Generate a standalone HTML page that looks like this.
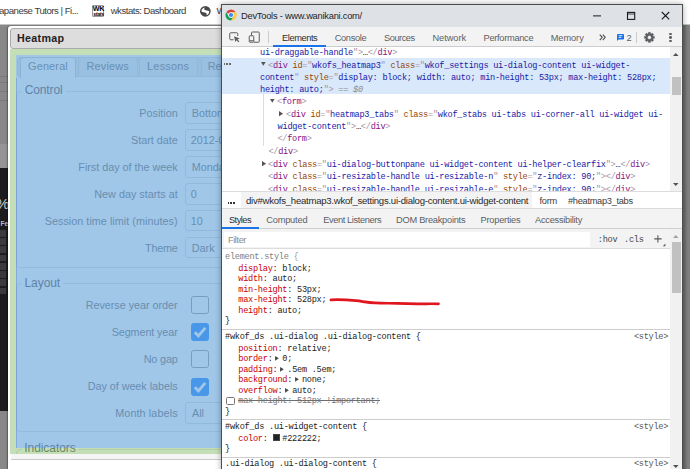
<!DOCTYPE html>
<html><head><meta charset="utf-8"><title>DevTools - www.wanikani.com/</title>
<style>
*{box-sizing:border-box;margin:0;padding:0}
html,body{width:690px;height:469px;overflow:hidden;background:#fff}
body{position:relative;font-family:"Liberation Sans",sans-serif;color:#222}
.a,.t,.m{position:absolute}
.t{line-height:20px;white-space:pre}
.m{line-height:20px;white-space:pre;font-family:"Liberation Mono",monospace;font-size:8.6px;letter-spacing:-0.264px;color:#222}
.tg{color:#881280}.br{color:#a894a6}.an{color:#994500}.av{color:#1a1aa6}.pr{color:#c80000}.gy{color:#808080}.gy2{color:#9a9a9a}.sk{color:#777}.m i{color:#8c8c8c}
svg{position:absolute;overflow:visible}
#bm{left:0;top:0;width:690px;height:25px;background:#fff;border-bottom:1px solid #c4c4c4}
#page{left:0;top:25px;width:690px;height:444px;background:#888888}
#dlg{left:7.6px;top:25.5px;width:400px;height:460px;background:#fff;border-radius:3px;box-shadow:-1px 0 1.5px rgba(0,0,0,.35)}
#ttl{left:10.3px;top:28px;width:400px;height:20.5px;background:#dddddd;border:1px solid #aaa;border-radius:3px}
.inp{position:absolute;left:185.2px;width:120px;height:21.6px;border:1px solid #d6d6d6;border-radius:3px;background:#fff}
.cb{position:absolute;left:191.3px;width:18px;height:18px;border:1px solid #858585;border-radius:2.5px;background:#fff}
.cb.on{background:#0075ff;border-color:#0075ff}
.fs{position:absolute;left:16.3px;width:400px;border:1px solid #dcdcdc;border-radius:4px}
.lg{background:#fff}
#dt{left:221px;top:4px;width:462.4px;height:480px;background:#fff;border:1px solid #4d4d4d;border-right-width:1.5px;box-shadow:0 0 6px 0 rgba(0,0,0,.33)}
.hl{position:absolute;height:1px;background:#cdcdcd}
</style></head><body>

<div id="bm" class="a"></div>
<span class="t" style="top:0.50px;font-size:9.6px;color:#3c3c3c;letter-spacing:-0.487px;left:-1.00px;">apanese Tutors | Fi...</span>
<span class="t" style="top:0.50px;font-size:9.6px;color:#3c3c3c;letter-spacing:-0.500px;left:110.70px;">wkstats: Dashboard</span>
<span class="t" style="top:0.50px;font-size:9.6px;color:#3c3c3c;left:216.50px;">W</span>
<div class="a" style="left:92.2px;top:4.9px;width:12.3px;height:12px;background:#fff;border:1px solid #9a9a9a;border-radius:1px"></div>
<span class="t" style="top:-1.20px;font-size:7.2px;color:#000;letter-spacing:-0.398px;left:92.80px;font-weight:bold;">WK</span>
<span class="t" style="top:3.80px;font-size:5.2px;color:#000;letter-spacing:-0.308px;left:93.20px;font-weight:bold;font-style:italic;">stats</span>
<svg style="left:199.6px;top:5.5px" width="10.7" height="10.7" viewBox="0 0 20 20"><circle cx="10" cy="10" r="10" fill="#484848"/><path d="M2.6 10 C2.6 6 5.5 3 9.4 2.7 C7.6 4.6 7.2 6.4 9.2 7.6 C11.6 9 14.4 8 17.3 9.6 C17.5 13.2 15.4 16.2 12 17.2 C13.2 15.2 12.6 13.6 10.6 12.8 C8 11.8 5 12.6 2.6 10Z" fill="#fff"/></svg>
<div id="page" class="a"></div><div class="a" style="left:680px;top:25px;width:10px;height:444px;background:linear-gradient(90deg,#6c6c6c 0 4.5px,#7e7e7e 7px,#828282)"></div>
<div class="a" style="left:0;top:76.1px;width:7.6px;height:1.2px;background:#7b7b7b"></div>
<div class="a" style="left:0;top:81.8px;width:7.6px;height:1.2px;background:#7b7b7b"></div>
<div class="a" style="left:0;top:90.9px;width:7.6px;height:1.2px;background:#7b7b7b"></div>
<div class="a" style="left:0;top:100.0px;width:7.6px;height:1.2px;background:#7b7b7b"></div>
<div class="a" style="left:0;top:144.3px;width:7.6px;height:24px;background:#959595"></div>
<div class="a" style="left:0;top:167.6px;width:7.6px;height:243px;background:#1c1c1e"></div>
<span class="t" style="top:193.50px;font-size:15px;color:#c9c9c9;left:-4.00px;">%</span>
<span class="t" style="top:214.00px;font-size:6.5px;color:#bdbdbd;left:0.50px;font-weight:bold;">Fe</span>
<div class="a" style="left:0;top:230.3px;width:6.4px;height:64.6px;background:repeating-linear-gradient(#3a3a3c 0 6.6px,#1c1c1e 6.6px 8.25px)"></div>
<div id="dlg" class="a"></div>
<div id="ttl" class="a"></div>
<span class="t" style="top:27.80px;font-size:10.7px;color:#222;letter-spacing:0.329px;left:17.00px;font-weight:bold;">Heatmap</span>
<div class="a" style="left:17px;top:56.5px;width:400px;height:20px;background:#e4e4e4;border:1px solid #d6d6d6;border-radius:3px"></div>
<div class="a" style="left:19.8px;top:57px;width:55.8px;height:20.5px;background:#fff;border:1px solid #c4c4c4;border-bottom:0;border-radius:3px 3px 0 0"></div>
<div class="a" style="left:77.6px;top:57px;width:60px;height:19px;background:#e9e9e9;border:1px solid #d4d4d4;border-bottom:0;border-radius:3px 3px 0 0"></div>
<div class="a" style="left:139.2px;top:57px;width:59px;height:19px;background:#e9e9e9;border:1px solid #d4d4d4;border-bottom:0;border-radius:3px 3px 0 0"></div>
<div class="a" style="left:200.6px;top:57px;width:70px;height:19px;background:#e9e9e9;border:1px solid #d4d4d4;border-bottom:0;border-radius:3px 3px 0 0"></div>
<span class="t" style="top:56.30px;font-size:10.9px;color:#606060;letter-spacing:0.174px;left:28.00px;">General</span>
<span class="t" style="top:56.30px;font-size:10.9px;color:#606060;letter-spacing:0.187px;left:86.50px;">Reviews</span>
<span class="t" style="top:56.30px;font-size:10.9px;color:#606060;letter-spacing:0.214px;left:147.10px;">Lessons</span>
<span class="t" style="top:56.30px;font-size:10.9px;color:#606060;left:207.70px;">Review Forecast</span>
<div class="fs" style="top:90.5px;height:177.5px"></div>
<div class="fs" style="top:283px;height:149px"></div>
<div class="fs" style="top:448.5px;height:60px"></div>
<div class="a lg" style="left:22px;top:84px;width:43.5px;height:12px"></div>
<div class="a lg" style="left:22px;top:277px;width:41px;height:12px"></div>
<div class="a lg" style="left:22px;top:442px;width:56px;height:12px"></div>
<span class="t" style="top:80.20px;font-size:12px;color:#3a3a3a;letter-spacing:-0.126px;left:24.70px;">Control</span>
<span class="t" style="top:272.70px;font-size:12px;color:#3a3a3a;letter-spacing:-0.072px;left:24.50px;">Layout</span>
<span class="t" style="top:438.30px;font-size:12px;color:#3a3a3a;letter-spacing:-0.073px;left:24.30px;">Indicators</span>
<div class="inp" style="top:102.3px"></div>
<span class="t" style="top:103.20px;font-size:10.8px;color:#585858;letter-spacing:-0.003px;left:139.30px;">Position</span>
<span class="t" style="top:103.20px;font-size:10.8px;color:#585858;left:191.80px;">Bottom</span>
<div class="inp" style="top:129.2px"></div>
<span class="t" style="top:130.10px;font-size:10.8px;color:#585858;letter-spacing:-0.013px;left:131.00px;">Start date</span>
<span class="t" style="top:130.10px;font-size:10.8px;color:#585858;left:190.80px;">2012-01-01</span>
<div class="inp" style="top:156.1px"></div>
<span class="t" style="top:157.00px;font-size:10.8px;color:#585858;letter-spacing:-0.012px;left:78.30px;">First day of the week</span>
<span class="t" style="top:157.00px;font-size:10.8px;color:#585858;left:191.80px;">Monday</span>
<div class="inp" style="top:183.0px"></div>
<span class="t" style="top:183.90px;font-size:10.8px;color:#585858;letter-spacing:-0.002px;left:94.30px;">New day starts at</span>
<span class="t" style="top:183.90px;font-size:10.8px;color:#585858;left:190.80px;">0</span>
<div class="inp" style="top:209.9px"></div>
<span class="t" style="top:210.80px;font-size:10.8px;color:#585858;letter-spacing:0.034px;left:44.70px;">Session time limit (minutes)</span>
<span class="t" style="top:210.80px;font-size:10.8px;color:#585858;left:190.80px;">10</span>
<div class="inp" style="top:236.8px"></div>
<span class="t" style="top:237.70px;font-size:10.8px;color:#585858;letter-spacing:-0.183px;left:145.00px;">Theme</span>
<span class="t" style="top:237.70px;font-size:10.8px;color:#585858;left:191.80px;">Dark</span>
<div class="cb" style="top:296.3px"></div>
<span class="t" style="top:295.20px;font-size:10.8px;color:#585858;letter-spacing:-0.025px;left:85.70px;">Reverse year order</span>
<div class="cb on" style="top:322.7px"></div>
<svg style="left:191.3px;top:322.7px" width="18" height="18" viewBox="0 0 18 18"><path d="M3.8 9.3 L7.4 12.9 L14.3 4.9" fill="none" stroke="#fff" stroke-width="2.9"/></svg>
<span class="t" style="top:321.60px;font-size:10.8px;color:#585858;letter-spacing:-0.103px;left:111.70px;">Segment year</span>
<div class="cb" style="top:350.1px"></div>
<span class="t" style="top:349.00px;font-size:10.8px;color:#585858;letter-spacing:-0.138px;left:143.70px;">No gap</span>
<div class="cb on" style="top:377.5px"></div>
<svg style="left:191.3px;top:377.5px" width="18" height="18" viewBox="0 0 18 18"><path d="M3.8 9.3 L7.4 12.9 L14.3 4.9" fill="none" stroke="#fff" stroke-width="2.9"/></svg>
<span class="t" style="top:376.40px;font-size:10.8px;color:#585858;letter-spacing:-0.036px;left:87.70px;">Day of week labels</span>
<div class="inp" style="top:402.4px"></div>
<span class="t" style="top:403.10px;font-size:10.8px;color:#585858;letter-spacing:0.105px;left:115.20px;">Month labels</span>
<span class="t" style="top:403.10px;font-size:10.8px;color:#585858;left:192.00px;">All</span>
<div class="a" style="left:8px;top:453.7px;width:400px;height:20px;background:#fff"></div>
<div class="a" style="left:10.5px;top:453.7px;width:400px;height:5.6px;background:#f5f5f5"></div>
<div class="a" style="left:10.5px;top:459.2px;width:400px;height:1px;background:#c9c9c9"></div>
<div class="a" style="left:10.3px;top:48.6px;width:400px;height:6.6px;background:rgba(147,196,125,.55)"></div>
<div class="a" style="left:10.3px;top:55.2px;width:5.7px;height:392.8px;background:rgba(147,196,125,.55)"></div>
<div class="a" style="left:10.3px;top:448px;width:400px;height:5.7px;background:rgba(147,196,125,.55)"></div>
<div class="a" style="left:16px;top:55.2px;width:400px;height:392.8px;background:rgba(111,168,220,.66)"></div>
<div class="a" style="left:15.8px;top:78px;width:0.9px;height:370px;background:rgba(80,120,200,.35)"></div>
<div id="dt" class="a"></div>
<div class="a" style="left:222px;top:5px;width:460px;height:21.7px;background:#dee1e6"></div>
<svg style="left:224.8px;top:9px" width="12" height="12" viewBox="0 0 48 48"><path d="M24 2 A22 22 0 0 1 43.05 13 L24 13 A11 11 0 0 0 14.47 18.5 L4.95 13 A22 22 0 0 1 24 2Z" fill="#db4437"/>
<path d="M43.05 13 A22 22 0 0 1 24 46 L33.53 29.5 A11 11 0 0 0 33.53 18.5 L33.53 13Z" fill="#ffcd40"/>
<path d="M24 13 L43.05 13 A22 22 0 0 1 24 46 L33.53 29.5 A11 11 0 0 0 24 13Z" fill="#ffcd40"/>
<path d="M24 46 A22 22 0 0 1 4.95 13 L14.47 29.5 A11 11 0 0 0 33.53 29.5 L24 46Z" fill="#0f9d58"/>
<circle cx="24" cy="24" r="10.5" fill="#fff"/><circle cx="24" cy="24" r="8.3" fill="#4285f4"/></svg>
<span class="t" style="top:6.00px;font-size:9.3px;color:#1f1f1f;letter-spacing:-0.238px;left:241.00px;">DevTools - www.wanikani.com/</span>
<svg style="left:590px;top:8px" width="84" height="16" viewBox="0 0 84 16"><g fill="none" stroke="#1a1a1a" stroke-width="1">
<path d="M3 7.9 H11"/><rect x="37.5" y="4.4" width="7.2" height="7" stroke-width="1.1"/><path d="M37.5 6H44.7" stroke-width="0.8"/><path d="M71.8 4 L79.2 11.3 M79.2 4 L71.8 11.3" stroke-width="1.1"/></g></svg>
<div class="a" style="left:222px;top:26.7px;width:460px;height:20.3px;background:#f3f3f3;border-bottom:1px solid #cbcdd1"></div>
<svg style="left:228.5px;top:32.3px" width="11.5" height="10.5" viewBox="0 0 23 21"><path d="M9 15.5 H3.5 A2 2 0 0 1 1.5 13.5 V3.5 A2 2 0 0 1 3.5 1.5 H15.5 A2 2 0 0 1 17.5 3.5 V8" fill="none" stroke="#5c5c5c" stroke-width="2"/><path d="M10 8.5 L21.5 13 L17 14.8 L20.8 19 L19 20.6 L15.3 16.3 L12.8 20 Z" fill="#5c5c5c"/></svg>
<svg style="left:248px;top:31px" width="12.5" height="12.5" viewBox="0 0 25 25"><g fill="none" stroke="#5c5c5c" stroke-width="2"><path d="M7 9 V3.5 A1.5 1.5 0 0 1 8.5 2 H21 A1.5 1.5 0 0 1 22.5 3.5 V21 A1.5 1.5 0 0 1 21 22.5 H12"/><rect x="2.5" y="9.5" width="9" height="13" rx="1.5"/></g><path d="M3 19.5H11" stroke="#5c5c5c" stroke-width="2"/></svg>
<div class="a" style="left:268px;top:31.3px;width:1px;height:11.5px;background:#cacaca"></div>
<span class="t" style="top:28.00px;font-size:9.25px;color:#2e2e2e;letter-spacing:-0.407px;left:282.00px;">Elements</span>
<span class="t" style="top:28.00px;font-size:9.25px;color:#5c6063;letter-spacing:-0.320px;left:334.70px;">Console</span>
<span class="t" style="top:28.00px;font-size:9.25px;color:#5c6063;letter-spacing:-0.462px;left:384.00px;">Sources</span>
<span class="t" style="top:28.00px;font-size:9.25px;color:#5c6063;letter-spacing:-0.061px;left:432.50px;">Network</span>
<span class="t" style="top:28.00px;font-size:9.25px;color:#5c6063;letter-spacing:-0.296px;left:483.60px;">Performance</span>
<span class="t" style="top:28.00px;font-size:9.25px;color:#5c6063;letter-spacing:-0.068px;left:550.70px;">Memory</span>
<div class="a" style="left:273px;top:45.4px;width:52.8px;height:1.8px;background:#1a73e8"></div>
<svg style="left:598.8px;top:33.8px" width="7" height="6.6" viewBox="0 0 14 13"><path d="M1.5 1 L6.5 6.5 L1.5 12 M7.5 1 L12.5 6.5 L7.5 12" fill="none" stroke="#4c4f52" stroke-width="2.2"/></svg>
<svg style="left:616.6px;top:33.5px" width="7" height="7" viewBox="0 0 14 14"><path d="M1.5 0 H12.5 A1.5 1.5 0 0 1 14 1.5 V9.5 A1.5 1.5 0 0 1 12.5 11 H3.2 L0 14 V1.5 A1.5 1.5 0 0 1 1.5 0Z" fill="#1a73e8"/><path d="M3.4 3.4H10.6M3.4 6.8H8.6" stroke="#fff" stroke-width="1.7"/></svg>
<span class="t" style="top:27.70px;font-size:9.25px;color:#5c6063;left:626.40px;">2</span>
<div class="a" style="left:635.8px;top:31.5px;width:1px;height:11.3px;background:#cacaca"></div>
<svg style="left:644.4px;top:32px" width="10.8" height="10.8" viewBox="0 0 20 20"><path d="M16.62 7.73 L19.37 7.90 L19.37 12.10 L16.62 12.27 L16.29 13.08 L18.11 15.14 L15.14 18.11 L13.08 16.29 L12.27 16.62 L12.10 19.37 L7.90 19.37 L7.73 16.62 L6.92 16.29 L4.86 18.11 L1.89 15.14 L3.71 13.08 L3.38 12.27 L0.63 12.10 L0.63 7.90 L3.38 7.73 L3.71 6.92 L1.89 4.86 L4.86 1.89 L6.92 3.71 L7.73 3.38 L7.90 0.63 L12.10 0.63 L12.27 3.38 L13.08 3.71 L15.14 1.89 L18.11 4.86 L16.29 6.92Z M13.50 10.00 A3.5 3.5 0 1 0 6.50 10.00 A3.5 3.5 0 1 0 13.50 10.00Z" fill="#5a5d61" fill-rule="evenodd" stroke="#5a5d61" stroke-width="0.5" stroke-linejoin="round"/></svg>
<div class="a" style="left:669.4px;top:32.550000000000004px;width:2.3px;height:2.3px;border-radius:50%;background:#5f6368"></div>
<div class="a" style="left:669.4px;top:36.25px;width:2.3px;height:2.3px;border-radius:50%;background:#5f6368"></div>
<div class="a" style="left:669.4px;top:39.95px;width:2.3px;height:2.3px;border-radius:50%;background:#5f6368"></div>
<div class="a" style="left:222px;top:58px;width:448.4px;height:36px;background:#d9e8fb"></div>
<div class="a" style="left:263px;top:94px;width:1px;height:52px;background:#d3ddf0"></div>
<div class="a" style="left:223.50px;top:63.3px;width:1.8px;height:1.8px;background:#6a6a6a"></div>
<div class="a" style="left:226.45px;top:63.3px;width:1.8px;height:1.8px;background:#6a6a6a"></div>
<div class="a" style="left:229.40px;top:63.3px;width:1.8px;height:1.8px;background:#6a6a6a"></div>
<div class="m" style="left:260.00px;top:42.70px;"><span class="av">ui-draggable-handle</span><span class="br">"</span><span class="br">&gt;</span>…<span class="br">&lt;/</span><span class="tg">div</span><span class="br">&gt;</span></div>
<svg style="left:260.8px;top:62.2px" width="4.6" height="3.8" viewBox="0 0 10 8"><path d="M0 0H10L5 8Z" fill="#555"/></svg>
<div class="m" style="left:268.00px;top:56.00px;"><span class="br">&lt;</span><span class="tg">div</span> <span class="an">id</span><span class="br">="</span><span class="av">wkofs_heatmap3</span><span class="br">"</span> <span class="an">class</span><span class="br">="</span><span class="av">wkof_settings ui-dialog-content ui-widget-</span></div>
<div class="m" style="left:260.00px;top:68.00px;"><span class="av">content</span><span class="br">"</span> <span class="an">style</span><span class="br">="</span><span class="av">display: block; width: auto; min-height: 53px; max-height: 528px;</span></div>
<div class="m" style="left:260.00px;top:80.00px;"><span class="av">height: auto;</span><span class="br">"</span><span class="br">&gt;</span> <i>== $0</i></div>
<svg style="left:270px;top:99.2px" width="4.6" height="3.8" viewBox="0 0 10 8"><path d="M0 0H10L5 8Z" fill="#555"/></svg>
<div class="m" style="left:277.00px;top:91.60px;"><span class="br">&lt;</span><span class="tg">form</span><span class="br">&gt;</span></div>
<svg style="left:279px;top:110.8px" width="4.1" height="5.3" viewBox="0 0 8 10"><path d="M0 0V10L8 5Z" fill="#555"/></svg>
<div class="m" style="left:286.00px;top:104.80px;"><span class="br">&lt;</span><span class="tg">div</span> <span class="an">id</span><span class="br">="</span><span class="av">heatmap3_tabs</span><span class="br">"</span> <span class="an">class</span><span class="br">="</span><span class="av">wkof_stabs ui-tabs ui-corner-all ui-widget ui-</span></div>
<div class="m" style="left:277.60px;top:116.80px;"><span class="av">widget-content</span><span class="br">"</span><span class="br">&gt;</span>…<span class="br">&lt;/</span><span class="tg">div</span><span class="br">&gt;</span></div>
<div class="m" style="left:277.40px;top:129.30px;"><span class="br">&lt;/</span><span class="tg">form</span><span class="br">&gt;</span></div>
<div class="m" style="left:268.40px;top:142.30px;"><span class="br">&lt;/</span><span class="tg">div</span><span class="br">&gt;</span></div>
<svg style="left:261.8px;top:161px" width="4.1" height="5.3" viewBox="0 0 8 10"><path d="M0 0V10L8 5Z" fill="#555"/></svg>
<div class="m" style="left:268.00px;top:154.80px;"><span class="br">&lt;</span><span class="tg">div</span> <span class="an">class</span><span class="br">="</span><span class="av">ui-dialog-buttonpane ui-widget-content ui-helper-clearfix</span><span class="br">"</span><span class="br">&gt;</span>…<span class="br">&lt;/</span><span class="tg">div</span><span class="br">&gt;</span></div>
<div class="m" style="left:268.00px;top:167.30px;"><span class="br">&lt;</span><span class="tg">div</span> <span class="an">class</span><span class="br">="</span><span class="av">ui-resizable-handle ui-resizable-n</span><span class="br">"</span> <span class="an">style</span><span class="br">="</span><span class="av">z-index: 90;</span><span class="br">"</span><span class="br">&gt;</span><span class="br">&lt;/</span><span class="tg">div</span><span class="br">&gt;</span></div>
<div class="m" style="left:268.00px;top:179.80px;"><span class="br">&lt;</span><span class="tg">div</span> <span class="an">class</span><span class="br">="</span><span class="av">ui-resizable-handle ui-resizable-e</span><span class="br">"</span> <span class="an">style</span><span class="br">="</span><span class="av">z-index: 90;</span><span class="br">"</span><span class="br">&gt;</span><span class="br">&lt;/</span><span class="tg">div</span><span class="br">&gt;</span></div>
<div class="a" style="left:670.4px;top:47.2px;width:11.6px;height:144.3px;background:#f1f1f1"></div><div class="a" style="left:671.6px;top:77px;width:9.2px;height:17.7px;background:#c1c1c1"></div>
<svg style="left:673.4px;top:52.7px" width="5.6" height="3.1" viewBox="0 0 9 5"><path d="M0 5L4.5 0L9 5Z" fill="#505050"/></svg>
<svg style="left:673.4px;top:182.8px" width="5.6" height="3.1" viewBox="0 0 9 5"><path d="M0 0L4.5 5L9 0Z" fill="#505050"/></svg>
<div class="a" style="left:222px;top:191.4px;width:460px;height:17.2px;background:#fff;border-top:1px solid #dcdcdc"></div>
<div class="a" style="left:240.8px;top:192.4px;width:291px;height:15.4px;background:#f3f3f3"></div>
<div class="a" style="left:227.80px;top:202.3px;width:1.5px;height:1.5px;background:#333"></div>
<div class="a" style="left:230.40px;top:202.3px;width:1.5px;height:1.5px;background:#333"></div>
<div class="a" style="left:233.00px;top:202.3px;width:1.5px;height:1.5px;background:#333"></div>
<span class="t" style="top:190.80px;font-size:9.6px;color:#2a2a2a;letter-spacing:-0.265px;left:246.00px;">div#wkofs_heatmap3.wkof_settings.ui-dialog-content.ui-widget-content</span>
<span class="t" style="top:191.30px;font-size:9.25px;color:#3c3c3c;letter-spacing:-0.225px;left:539.50px;">form</span>
<span class="t" style="top:191.30px;font-size:9.25px;color:#3c3c3c;letter-spacing:-0.294px;left:568.00px;">#heatmap3_tabs</span>
<div class="a" style="left:222px;top:208.4px;width:460px;height:20.4px;background:#f3f3f3;border-top:1px solid #dadada;border-bottom:1px solid #cfcfcf"></div>
<span class="t" style="top:209.90px;font-size:9.25px;color:#2e2e2e;letter-spacing:-0.498px;left:228.90px;">Styles</span>
<span class="t" style="top:209.90px;font-size:9.25px;color:#5c6063;letter-spacing:-0.185px;left:266.20px;">Computed</span>
<span class="t" style="top:209.90px;font-size:9.25px;color:#5c6063;letter-spacing:-0.384px;left:323.20px;">Event Listeners</span>
<span class="t" style="top:209.90px;font-size:9.25px;color:#5c6063;letter-spacing:-0.247px;left:396.00px;">DOM Breakpoints</span>
<span class="t" style="top:209.90px;font-size:9.25px;color:#5c6063;letter-spacing:-0.236px;left:480.60px;">Properties</span>
<span class="t" style="top:209.90px;font-size:9.25px;color:#5c6063;letter-spacing:-0.260px;left:535.00px;">Accessibility</span>
<div class="a" style="left:222px;top:227.3px;width:36.8px;height:1.7px;background:#1a73e8"></div>
<div class="a" style="left:222px;top:229px;width:460px;height:19.6px;background:#f3f3f3;border-bottom:1px solid #dcdcdc"></div>
<div class="a" style="left:223.8px;top:231.5px;width:366px;height:15.6px;background:#fff"></div>
<span class="t" style="top:229.50px;font-size:9.25px;color:#8a8a8a;letter-spacing:-0.426px;left:228.00px;">Filter</span>
<span class="t" style="top:230.30px;font-size:8.6px;color:#444;left:597.80px;font-family:'Liberation Mono',monospace;letter-spacing:-0.264px;">:hov</span>
<span class="t" style="top:230.30px;font-size:8.6px;color:#444;left:624.00px;font-family:'Liberation Mono',monospace;letter-spacing:-0.264px;">.cls</span>
<svg style="left:654.3px;top:234.8px" width="12" height="12" viewBox="0 0 12 12"><path d="M3.9 0.2V7.6M0.2 3.9H7.6" stroke="#5a5a5a" stroke-width="1.1" fill="none"/><path d="M11.4 8.6V11.2H8.8Z" fill="#5a5a5a"/></svg>
<div class="m" style="left:225.00px;top:246.80px;"><span class="gy">element.style </span><span class="gy2">{</span></div>
<div class="m" style="left:238.30px;top:258.90px;"><span class="pr">display</span>: block;</div>
<div class="m" style="left:238.30px;top:269.35px;"><span class="pr">width</span>: auto;</div>
<div class="m" style="left:238.30px;top:279.80px;"><span class="pr">min-height</span>: 53px;</div>
<div class="m" style="left:238.30px;top:290.25px;"><span class="pr">max-height</span>: 528px;</div>
<div class="m" style="left:238.30px;top:300.70px;"><span class="pr">height</span>: auto;</div>
<div class="m" style="left:225.00px;top:311.20px;">}</div>
<svg style="left:328px;top:294px" width="116" height="14" viewBox="0 0 116 14"><path d="M2.9 5.8 C10 5.4 20 5.9 28 6.7 C35 7.5 40 8.6 47 8.9 C55 9.3 62 9.2 69 9.4 C77 9.7 83 9.8 90 9.8 C98 9.8 104 9.7 110.5 9.8" fill="none" stroke="#e0161f" stroke-width="2.7" stroke-linecap="round"/></svg>
<div class="hl" style="left:222px;top:328.80px;width:448.4px"></div>
<div class="m" style="left:225.00px;top:326.80px;">#wkof_ds .ui-dialog .ui-dialog-content {</div>
<span class="t" style="top:326.80px;font-size:8.6px;color:#555;left:633.88px;font-family:'Liberation Mono',monospace;letter-spacing:-0.264px;">&lt;style&gt;</span>
<div class="m" style="left:238.30px;top:338.70px;"><span class="pr">position</span>: relative;</div>
<svg style="left:274.972px;top:356.3px" width="3.9" height="4.7" viewBox="0 0 8 10"><path d="M0 0V10L8 5Z" fill="#484848"/></svg><div class="m" style="left:238.30px;top:349.20px;"><span class="pr">border</span>:  0;</div>
<svg style="left:279.868px;top:366.8px" width="3.9" height="4.7" viewBox="0 0 8 10"><path d="M0 0V10L8 5Z" fill="#484848"/></svg><div class="m" style="left:238.30px;top:359.70px;"><span class="pr">padding</span>:  .5em .5em;</div>
<svg style="left:294.556px;top:377.3px" width="3.9" height="4.7" viewBox="0 0 8 10"><path d="M0 0V10L8 5Z" fill="#484848"/></svg><div class="m" style="left:238.30px;top:370.20px;"><span class="pr">background</span>:  none;</div>
<svg style="left:284.764px;top:387.8px" width="3.9" height="4.7" viewBox="0 0 8 10"><path d="M0 0V10L8 5Z" fill="#484848"/></svg><div class="m" style="left:238.30px;top:380.70px;"><span class="pr">overflow</span>:  auto;</div>
<div class="a" style="left:226px;top:396.80px;width:8.6px;height:8.6px;border:1px solid #767676;border-radius:1.6px;background:#fff"></div>
<div class="m" style="left:238.30px;top:391.20px;"><span class="sk">max-height: 512px !important;</span></div>
<div class="a" style="left:238.3px;top:400.20px;width:142.0px;height:1px;background:#6e6e6e"></div>
<div class="m" style="left:225.00px;top:401.70px;">}</div>
<div class="hl" style="left:222px;top:418.80px;width:448.4px"></div>
<div class="m" style="left:225.00px;top:416.80px;">#wkof_ds .ui-widget-content {</div>
<span class="t" style="top:416.80px;font-size:8.6px;color:#555;left:633.88px;font-family:'Liberation Mono',monospace;letter-spacing:-0.264px;">&lt;style&gt;</span>
<div class="m" style="left:238.30px;top:428.70px;"><span class="pr">color</span>:   #222222;</div>
<div class="a" style="left:272.97px;top:434.20px;width:7.2px;height:7.2px;background:#222;border:1px solid #444"></div>
<div class="m" style="left:225.00px;top:439.20px;">}</div>
<div class="hl" style="left:222px;top:456.50px;width:448.4px"></div>
<div class="m" style="left:225.00px;top:454.30px;">.ui-dialog .ui-dialog-content {</div>
<span class="t" style="top:454.30px;font-size:8.6px;color:#555;left:633.88px;font-family:'Liberation Mono',monospace;letter-spacing:-0.264px;">&lt;style&gt;</span>
<div class="a" style="left:670.4px;top:229px;width:11.6px;height:240px;background:#f1f1f1"></div><div class="a" style="left:671.6px;top:242.4px;width:9.2px;height:50.6px;background:#c1c1c1"></div>
<svg style="left:673.4px;top:235px" width="5.6" height="3.1" viewBox="0 0 9 5"><path d="M0 5L4.5 0L9 5Z" fill="#a0a0a0"/></svg>
<svg style="left:673.4px;top:464.8px" width="5.6" height="3.1" viewBox="0 0 9 5"><path d="M0 0L4.5 5L9 0Z" fill="#505050"/></svg>
</body></html>
